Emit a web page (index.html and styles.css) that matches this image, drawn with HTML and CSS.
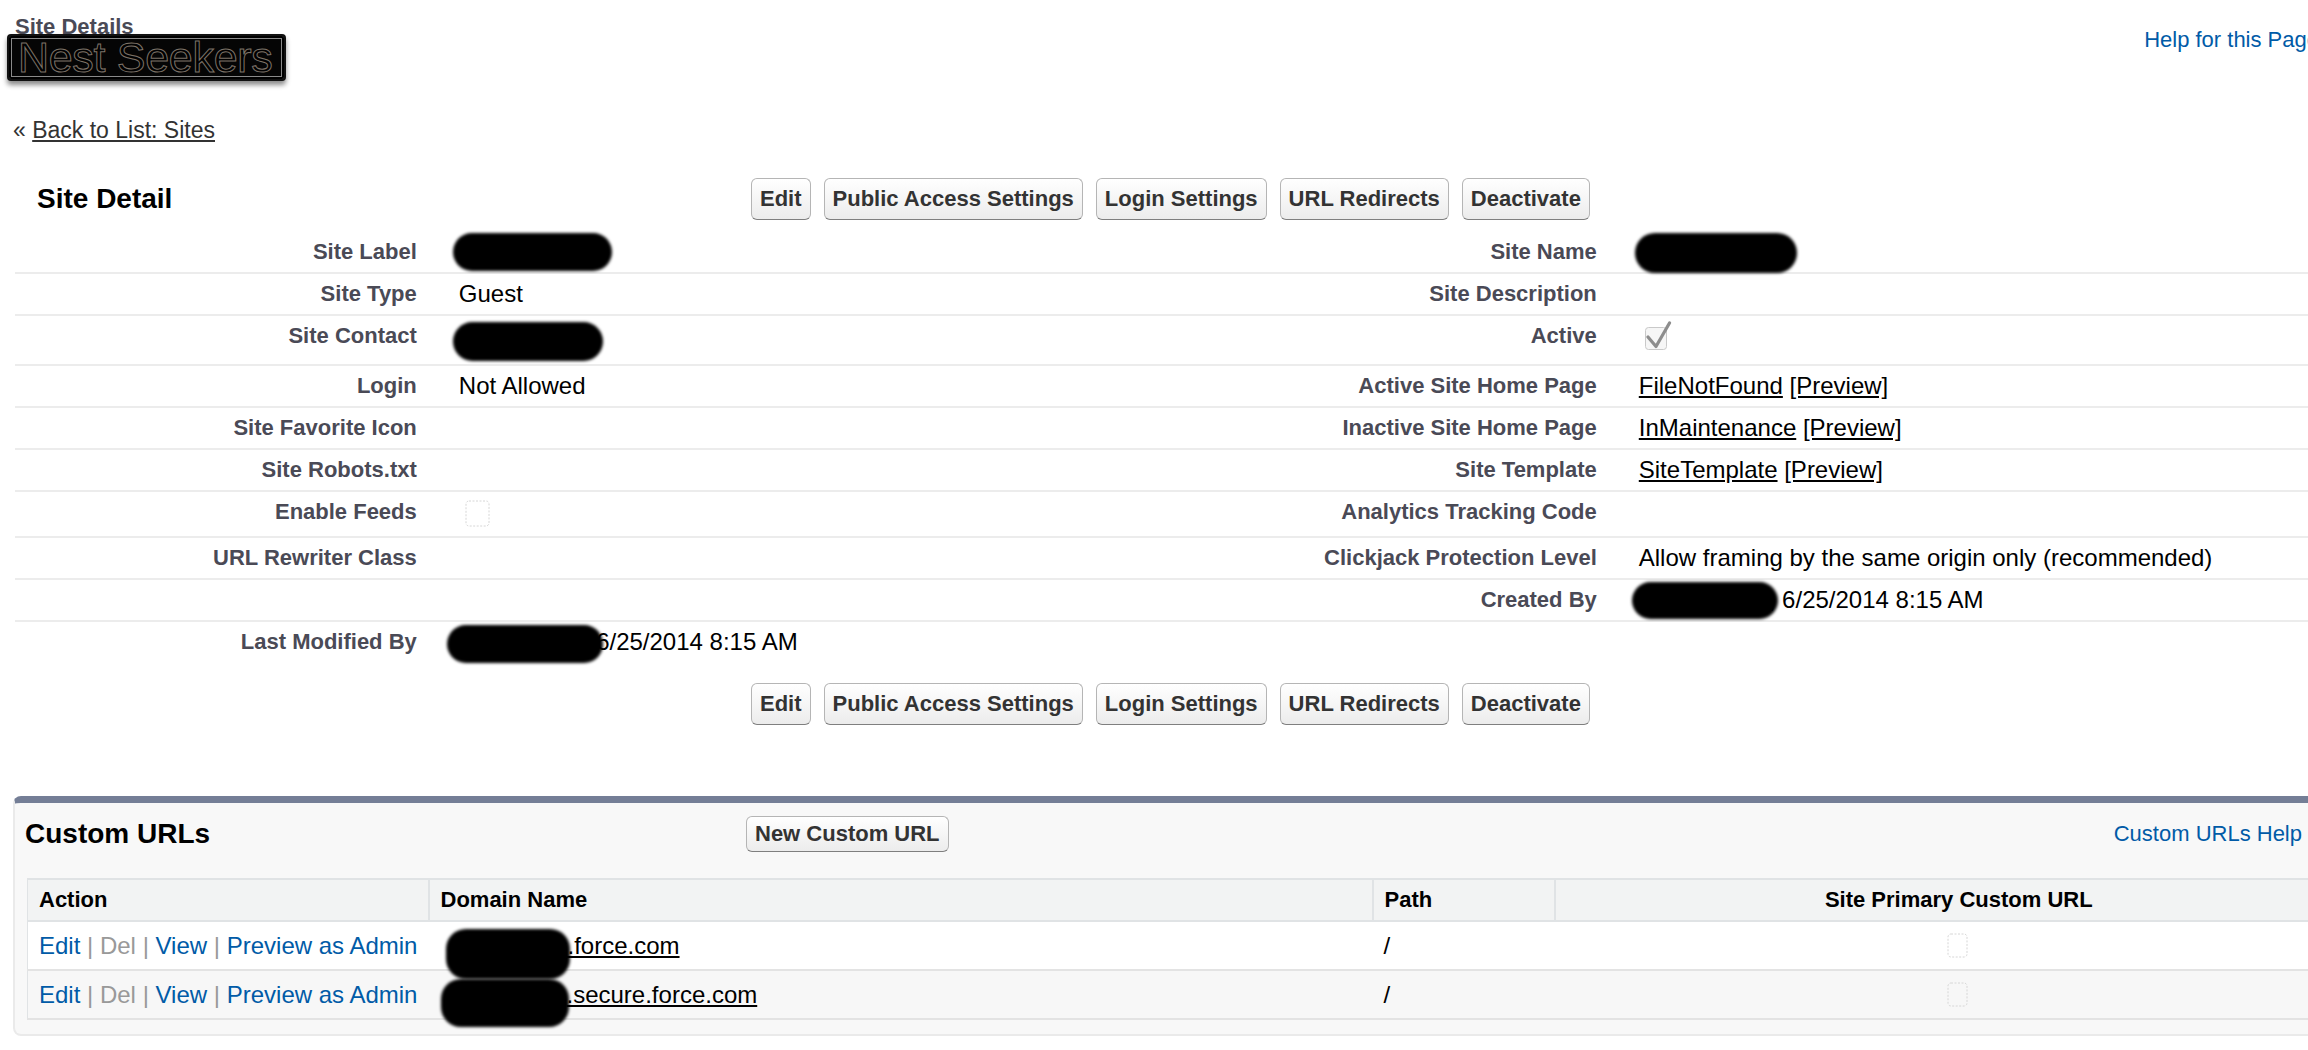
FILE: index.html
```html
<!DOCTYPE html>
<html lang="en">
<head>
    <meta charset="UTF-8">
    <title>Site Details - Nest Seekers</title>
    <link rel="stylesheet" href="styles.css">
</head>
<body>
<div class="page">

    <div class="page-title">
        <div class="title-left">
            <h1 class="page-type">Site Details</h1>
            <div class="logo">Nest Seekers</div>
        </div>
        <a class="help-link" href="#">Help for this Page <span class="help-icon">?</span></a>
    </div>

    <div class="breadcrumb">&laquo; <a href="#">Back to List: Sites</a></div>

    <div class="detail-block">
        <div class="pb-header">
            <h2 class="pb-title">Site Detail</h2>
            <div class="buttons">
                <button class="btn">Edit</button>
                <button class="btn">Public Access Settings</button>
                <button class="btn">Login Settings</button>
                <button class="btn">URL Redirects</button>
                <button class="btn">Deactivate</button>
            </div>
        </div>

        <table class="detail-list">
            <colgroup>
                <col class="col-label">
                <col class="col-data">
                <col class="col-label">
                <col class="col-data">
            </colgroup>
            <tr>
                <td class="label">Site Label</td>
                <td class="data"><span class="redact r-site-label"></span></td>
                <td class="label">Site Name</td>
                <td class="data"><span class="redact r-site-name"></span></td>
            </tr>
            <tr>
                <td class="label">Site Type</td>
                <td class="data">Guest</td>
                <td class="label">Site Description</td>
                <td class="data"></td>
            </tr>
            <tr>
                <td class="label">Site Contact</td>
                <td class="data"><span class="redact r-contact"></span></td>
                <td class="label">Active</td>
                <td class="data">
                    <svg class="cb-checked" width="28" height="35" viewBox="0 0 28 35">
                        <rect x="1.5" y="6.5" width="21" height="22" rx="3" fill="#f6f6f6" stroke="#c9c9c9"/>
                        <path d="M4 16 L12 25.5 L25.5 2" fill="none" stroke="#8d8d8d" stroke-width="3.2" stroke-linecap="round" stroke-linejoin="round"/>
                    </svg>
                </td>
            </tr>
            <tr>
                <td class="label">Login</td>
                <td class="data">Not Allowed</td>
                <td class="label">Active Site Home Page</td>
                <td class="data"><a class="plain-link" href="#">FileNotFound</a> <a class="plain-link" href="#">[Preview]</a></td>
            </tr>
            <tr>
                <td class="label">Site Favorite Icon</td>
                <td class="data"></td>
                <td class="label">Inactive Site Home Page</td>
                <td class="data"><a class="plain-link" href="#">InMaintenance</a> <a class="plain-link" href="#">[Preview]</a></td>
            </tr>
            <tr>
                <td class="label">Site Robots.txt</td>
                <td class="data"></td>
                <td class="label">Site Template</td>
                <td class="data"><a class="plain-link" href="#">SiteTemplate</a> <a class="plain-link" href="#">[Preview]</a></td>
            </tr>
            <tr>
                <td class="label">Enable Feeds</td>
                <td class="data">
                    <svg class="cb-empty" width="26" height="28" viewBox="0 0 26 28">
                        <rect x="1" y="1" width="23" height="25" rx="3" fill="none" stroke="#d6d6d6" stroke-dasharray="2 1.5"/>
                    </svg>
                </td>
                <td class="label">Analytics Tracking Code</td>
                <td class="data"></td>
            </tr>
            <tr>
                <td class="label">URL Rewriter Class</td>
                <td class="data"></td>
                <td class="label">Clickjack Protection Level</td>
                <td class="data">Allow framing by the same origin only (recommended)</td>
            </tr>
            <tr>
                <td class="label"></td>
                <td class="data"></td>
                <td class="label">Created By</td>
                <td class="data"><span class="redact r-created"></span>, 6/25/2014 8:15 AM</td>
            </tr>
            <tr class="last">
                <td class="label">Last Modified By</td>
                <td class="data"><span class="redact r-modified"></span>, 6/25/2014 8:15 AM</td>
                <td class="label"></td>
                <td class="data"></td>
            </tr>
        </table>

        <div class="buttons bottom-buttons">
            <button class="btn">Edit</button>
            <button class="btn">Public Access Settings</button>
            <button class="btn">Login Settings</button>
            <button class="btn">URL Redirects</button>
            <button class="btn">Deactivate</button>
        </div>
    </div>

    <div class="related-list">
        <div class="rl-header">
            <h3 class="rl-title">Custom URLs</h3>
            <div><button class="btn btn-small">New Custom URL</button></div>
            <a class="help-link rl-help" href="#">Custom URLs Help <span class="help-icon">?</span></a>
        </div>

        <table class="list">
            <colgroup>
                <col class="col-action">
                <col class="col-domain">
                <col class="col-path">
                <col class="col-primary">
            </colgroup>
            <thead>
                <tr>
                    <th>Action</th>
                    <th>Domain Name</th>
                    <th>Path</th>
                    <th class="center">Site Primary Custom URL</th>
                </tr>
            </thead>
            <tbody>
                <tr>
                    <td class="actions"><a href="#">Edit</a> <span class="sep">|</span> <span class="disabled">Del</span> <span class="sep">|</span> <a href="#">View</a> <span class="sep">|</span> <a href="#">Preview as Admin</a></td>
                    <td><span class="redact r-url1"></span><a class="plain-link" href="#">s.force.com</a></td>
                    <td>/</td>
                    <td class="center">
                        <svg class="cb-small" width="22" height="26" viewBox="0 0 22 26">
                            <rect x="1" y="1" width="19" height="23" rx="3" fill="none" stroke="#d6d6d6" stroke-dasharray="2 1.5"/>
                        </svg>
                    </td>
                </tr>
                <tr class="alt">
                    <td class="actions"><a href="#">Edit</a> <span class="sep">|</span> <span class="disabled">Del</span> <span class="sep">|</span> <a href="#">View</a> <span class="sep">|</span> <a href="#">Preview as Admin</a></td>
                    <td><span class="redact r-url2"></span><a class="plain-link" href="#">.secure.force.com</a></td>
                    <td>/</td>
                    <td class="center">
                        <svg class="cb-small" width="22" height="26" viewBox="0 0 22 26">
                            <rect x="1" y="1" width="19" height="23" rx="3" fill="none" stroke="#d6d6d6" stroke-dasharray="2 1.5"/>
                        </svg>
                    </td>
                </tr>
            </tbody>
        </table>
    </div>

</div>
</body>
</html>
```

FILE: styles.css
```css
html, body {
    overflow: hidden;
}

body {
    margin: 0;
    font-family: "Liberation Sans", Arial, sans-serif;
    font-size: 24px;
    color: #000;
    background-color: #fff;
}

.page {
    width: 2363px;
    margin-left: 13px;
}

/* page title */

.page-title {
    display: flex;
    justify-content: space-between;
    align-items: flex-start;
    padding-top: 16px;
}

.page-type {
    margin: 0 0 0 2px;
    font-size: 22px;
    line-height: 22px;
    font-weight: bold;
    color: #4a4a56;
}

.logo {
    box-sizing: border-box;
    width: 279px;
    height: 47px;
    margin: -4px 0 0 -6px;
    padding-left: 9px;
    background-color: #050505;
    border: 2px solid #111;
    border-radius: 4px;
    box-shadow: inset 0 0 0 2px #000, inset 0 0 0 3px #8a8a8a, 0 4px 5px rgba(0, 0, 0, 0.45);
    font-size: 43px;
    line-height: 42px;
    letter-spacing: -0.3px;
    color: #000;
    -webkit-text-stroke: 1px #7d7368;
    white-space: nowrap;
    overflow: hidden;
}

.help-link {
    display: flex;
    align-items: center;
    gap: 8px;
    font-size: 22px;
    line-height: 24px;
    color: #015ba7;
    text-decoration: none;
}

.page-title .help-link {
    margin-top: 9px;
    padding-right: 19px;
}

.help-icon {
    display: inline-block;
    width: 30px;
    height: 30px;
    border-radius: 50%;
    background-color: #1797c0;
    color: #fff;
    font-size: 20px;
    font-weight: bold;
    line-height: 30px;
    text-align: center;
}

.breadcrumb {
    margin-top: 35px;
    font-size: 23px;
    line-height: 28px;
    color: #333;
}

.breadcrumb a {
    color: #333;
    text-decoration: underline;
}

/* detail block */

.detail-block {
    width: 2360px;
    margin: 34px 0 0 2px;
}

.pb-header {
    display: grid;
    grid-template-columns: 736px 1fr;
    align-items: center;
    height: 42px;
    margin-bottom: 12px;
}

.pb-title {
    margin: 0;
    padding-left: 22px;
    font-size: 28px;
    font-weight: bold;
    color: #000;
}

.buttons {
    display: flex;
    gap: 13px;
}

.bottom-buttons {
    margin-top: 21px;
    padding-left: 736px;
}

.btn {
    box-sizing: border-box;
    height: 42px;
    padding: 0 8px;
    font-family: "Liberation Sans", Arial, sans-serif;
    font-size: 22px;
    font-weight: bold;
    color: #333;
    background: linear-gradient(#ffffff, #ececec);
    border: 1px solid #b5b5b5;
    border-bottom-color: #7f7f7f;
    border-radius: 6px;
    cursor: pointer;
}

.btn-small {
    height: 36px;
}

.detail-list {
    width: 100%;
    border-collapse: collapse;
    table-layout: fixed;
}

.col-label {
    width: 18%;
}

.col-data {
    width: 32%;
}

.detail-list td {
    padding: 8px 19px;
    line-height: 24px;
    vertical-align: top;
    border-bottom: 2px solid #ececec;
    white-space: nowrap;
}

.detail-list td.label {
    padding-left: 10px;
    padding-right: 23px;
    text-align: right;
    font-size: 22px;
    font-weight: bold;
    color: #4a4a56;
}

.detail-list tr.last td {
    border-bottom: none;
}

.plain-link {
    color: #000;
    text-decoration: underline;
}

.cb-checked {
    display: block;
    margin: -3px 0 0 5px;
}

.cb-empty {
    display: block;
    margin-left: 6px;
}

/* redaction marks */

.redact {
    display: inline-block;
    position: relative;
    z-index: 1;
    vertical-align: top;
    background-color: #000;
    border-radius: 20px;
    filter: blur(1.5px);
}

.r-site-label {
    width: 159px;
    height: 38px;
    margin: -7px 0 -7px -6px;
}

.r-site-name {
    width: 162px;
    height: 40px;
    margin: -7px 0 -9px -4px;
}

.r-contact {
    width: 150px;
    height: 39px;
    margin: -2px 0 -13px -6px;
}

.r-created {
    width: 146px;
    height: 37px;
    margin: -6px -9px -7px -7px;
}

.r-modified {
    width: 156px;
    height: 38px;
    margin: -5px -20px -9px -12px;
}

.r-url1 {
    width: 124px;
    height: 50px;
    margin: -5px -14px -21px 6px;
}

.r-url2 {
    width: 128px;
    height: 48px;
    margin: -4px -2px -20px 1px;
}

/* related list */

.related-list {
    margin-top: 71px;
    padding: 0 12px 14px;
    background-color: #f8f8f8;
    border: 2px solid #eaeaea;
    border-top: 7px solid #747e96;
    border-radius: 8px;
}

.rl-header {
    display: grid;
    grid-template-columns: 731px 1fr auto;
    align-items: center;
    height: 36px;
    margin: 0 -12px 26px;
    padding-top: 13px;
}

.rl-title {
    margin: 0;
    padding-left: 10px;
    font-size: 28px;
    font-weight: bold;
    color: #000;
}

.rl-help {
    padding-right: 34px;
}

.list {
    width: 100%;
    border-collapse: collapse;
    table-layout: fixed;
    background-color: #fff;
    border: 1px solid #e0e3e5;
    border-top-width: 2px;
}

.col-action {
    width: 401px;
}

.col-domain {
    width: 944px;
}

.col-path {
    width: 182px;
}

.col-primary {
    width: 808px;
}

.list th {
    padding: 9px 11px;
    font-size: 22px;
    line-height: 22px;
    font-weight: bold;
    text-align: left;
    background-color: #f2f3f3;
    border-right: 2px solid #e0e3e5;
    border-bottom: 2px solid #e0e3e5;
}

.list th:last-child {
    border-right: none;
}

.list td {
    padding: 12px 11px 10px;
    line-height: 24px;
    vertical-align: top;
    white-space: nowrap;
    border-bottom: 2px solid #e3e3e3;
}

.list tr.alt td {
    background-color: #f7f7f7;
}

.list .center {
    text-align: center;
}

.actions a {
    color: #015ba7;
    text-decoration: none;
}

.sep,
.disabled {
    color: #999;
}

.cb-small {
    display: inline-block;
    vertical-align: top;
    margin-top: -1px;
}
```
